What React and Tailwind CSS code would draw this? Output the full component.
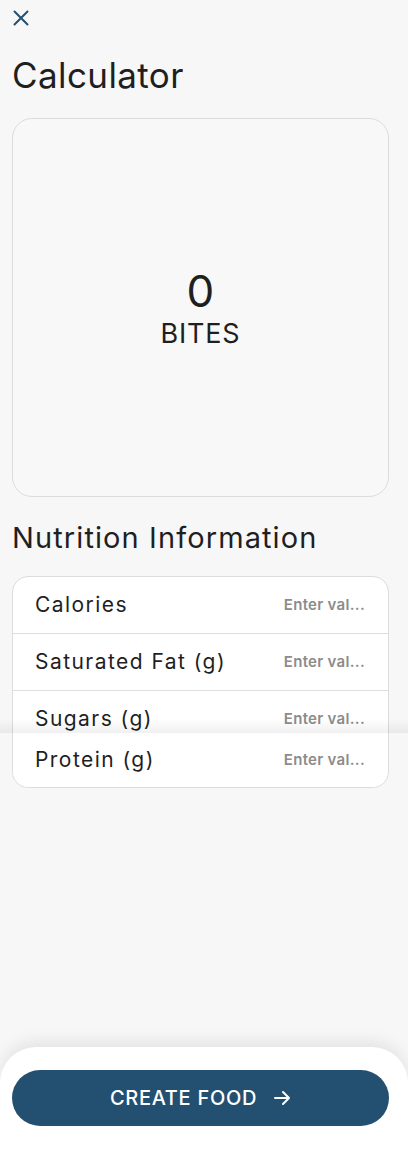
import React from "react";

const FONT = { fontFamily: "Inter, 'Noto Sans', sans-serif" };

const rows = ["Calories", "Saturated Fat (g)", "Sugars (g)"];

function NutritionRow({ label }) {
  return (
    <div className="h-[57px] flex items-center justify-between pl-[22px] pr-[23px] border-b border-[#dedede]">
      <span className="text-[21px] tracking-[1.45px] text-[#1f1f1f]">{label}</span>
      <span className="text-[15px] font-semibold tracking-[0.3px] text-[#8c8c8c]">Enter val...</span>
    </div>
  );
}

export default function App() {
  return (
    <div className="relative w-[408px] h-[1164px] bg-[#f7f7f7] overflow-hidden" style={FONT}>
      <div className="pl-3 pr-[19px]">
        {/* close */}
        <button className="mt-[10px] ml-[1px] w-4 h-4 flex items-center justify-center">
          <svg width="16" height="16" viewBox="0 0 16 16" fill="none">
            <path d="M1.5 1.5L14.5 14.5M14.5 1.5L1.5 14.5" stroke="#23506f" strokeWidth="2" strokeLinecap="round" />
          </svg>
        </button>

        <h1 className="mt-[27px] text-[35px] leading-[44px] text-[#1f1f1f] tracking-[0.4px]">Calculator</h1>

        {/* bites card */}
        <div className="mt-[21px] h-[379px] rounded-[20px] border border-[#dcdcdc] bg-[#f8f8f8] flex flex-col items-center justify-center">
          <div className="text-[44px] leading-[48px] text-[#1f1f1f]">0</div>
          <div className="mt-[4px] text-[27px] leading-[30px] tracking-[0.8px] text-[#1f1f1f]">BITES</div>
        </div>

        <h2 className="mt-[23px] text-[29px] leading-[36px] tracking-[1.1px] text-[#1f1f1f]">Nutrition Information</h2>

        {/* nutrition list */}
        <div className="mt-[20px] rounded-[16px] border border-[#dcdcdc] bg-white">
          <div className="rounded-t-[16px] overflow-hidden">
            {rows.map((r) => (
              <NutritionRow key={r} label={r} />
            ))}
          </div>
          <div className="relative -mt-[15px] bg-white rounded-b-[16px]">
            <div className="absolute -top-[14px] -left-[13px] -right-[20px] h-[14px] bg-gradient-to-t from-[rgba(0,0,0,0.06)] to-transparent" />
            <div className="h-[54px] flex items-center justify-between pl-[22px] pr-[23px]">
              <span className="text-[21px] tracking-[1.45px] text-[#1f1f1f]">Protein (g)</span>
              <span className="text-[15px] font-semibold tracking-[0.3px] text-[#8c8c8c]">Enter val...</span>
            </div>
          </div>
        </div>
      </div>

      {/* bottom sheet */}
      <div className="absolute left-0 right-0 bottom-0 h-[117px] bg-white rounded-t-[36px] shadow-[0_-6px_16px_rgba(0,0,0,0.08)] pl-3 pr-[19px] pt-[23px]">
        <button className="w-full h-[56px] rounded-full bg-[#235070] flex items-center justify-center gap-[16px] text-white">
          <span className="text-[20px] font-medium tracking-[0.7px]">CREATE FOOD</span>
          <svg width="18" height="18" viewBox="0 0 18 18" fill="none">
            <path d="M2 9H16M10 3L16 9L10 15" stroke="white" strokeWidth="2" strokeLinecap="round" strokeLinejoin="round" />
          </svg>
        </button>
      </div>
    </div>
  );
}
